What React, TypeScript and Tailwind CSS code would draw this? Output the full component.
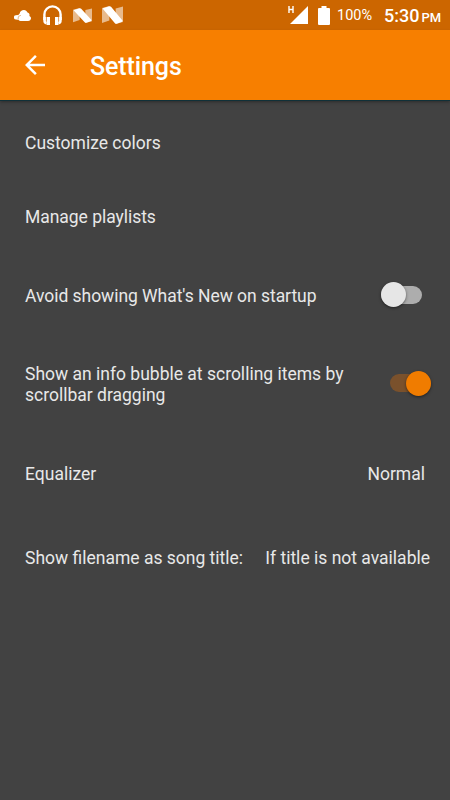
import type { ReactNode } from 'react'

function NougatIcon({ className }: { className: string }) {
  return (
    <svg className={className} viewBox="0 0 20 18" preserveAspectRatio="none" fill="#fff">
      <path d="M0 2 L7 0 V14.500 L0 17 Z" opacity="0.55" />
      <path d="M13 2.500 L20 0.500 V16 L13 18 Z" opacity="0.55" />
      <path d="M1 2.300 L7 0.200 Q8 0 8.600 .8 L19.500 14.500 Q19.500 15.500 18.500 16 L14 17.800 Q13 18 12.300 17.200 L1.300 3.500 Q.7 2.600 1 2.300 Z" />
    </svg>
  )
}

function StatusBar() {
  return (
    <div className="flex h-[30px] shrink-0 items-center bg-[#cc6600]">
      {/* Notifications */}
      <svg className="ml-3.5 h-[11px] w-[17px]" viewBox="0 0 17 11" fill="#fff">
        <path d="M2 5.300A2.100 2.100 0 0 0 2 9.500L5 10V5.600Q3.500 4.500 2 5.300z" />
        <path d="M6.500 11h7.500c1.700 0 3-1.200 3-2.700 0-1.100-.6-2-1.600-2.400.6-1.500-.3-3.200-1.900-3.500C12.800.9 11.600 0 10 0 7.700 0 6 1.400 5.700 3.500 4 4.500 3.800 6.500 4 8.500 4.200 10 5.200 11 6.500 11z" />
        <path d="M4.300 9.500C3.700 7.500 4.500 5.700 6.800 5.400" fill="none" stroke="#cc6600" strokeWidth="0.500" />
      </svg>
      <svg className="ml-3 h-5 w-[19px]" viewBox="0 0 19 20" fill="none" stroke="#fff">
        <path d="M1.400 15V9.500a8.100 8.100 0 0 1 16.200 0V15" strokeWidth="2.400" />
        <path d="M5.300 12v8M13.700 12v8" strokeWidth="3.400" />
        <path d="M1.600 12v4q0 1.800 2 2.200M17.400 12v4q0 1.800-2 2.200" strokeWidth="2.600" />
      </svg>
      <NougatIcon className="ml-[11px] h-[15px] w-[19px]" />
      <NougatIcon className="ml-2.5 h-[18px] w-[21px]" />

      {/* Signal, battery and clock */}
      <div className="ml-auto flex items-center text-white">
        <svg className="h-5 w-[21px]" viewBox="0 0 21 20" fill="#fff">
          <path d="M20 1v18H2z" />
          <path d="M1 1v7M5 1v7M1 4.500h4" stroke="#fff" strokeWidth="1.400" />
        </svg>
        <svg className="ml-[9px] h-[19px] w-3" viewBox="0 0 12 19" fill="#fff">
          <path d="M3.500 0h5v2H11q1 0 1 1v15q0 1-1 1H1q-1 0-1-1V3q0-1 1-1h2.500z" />
        </svg>
        <span className="ml-[7px] w-[47px] pt-[3px] text-[14.500px] leading-none">100%</span>
        <span className="flex w-[66px] items-baseline gap-[2px] pt-0.5 text-[18px] leading-none font-medium">
          5:30 <span className="text-[13px]">PM</span>
        </span>
      </div>
    </div>
  )
}

function Toggle({ on = false }: { on?: boolean }) {
  return on ? (
    <span className="-mr-px mb-1 flex h-[18px] w-[41px] items-center justify-end rounded-full bg-[#7a512c]">
      <span className="size-[25px] shrink-0 rounded-full bg-[#f07c00] shadow-[0_1px_3px_rgba(0,0,0,0.5)]" />
    </span>
  ) : (
    <span className="mr-2 mb-1 flex h-[18px] w-[41px] items-center rounded-full bg-[#adadad]">
      <span className="size-[25px] shrink-0 rounded-full bg-[#e6e6e6] shadow-[0_1px_3px_rgba(0,0,0,0.5)]" />
    </span>
  )
}

function Row({ label, className, children }: { label: ReactNode; className: string; children?: ReactNode }) {
  return (
    <li className={`flex items-center justify-between ${className}`}>
      <span>{label}</span>
      {children}
    </li>
  )
}

export default function App() {
  return (
    <main className="flex h-[800px] w-[450px] flex-col overflow-hidden bg-[#424242] font-['Roboto',sans-serif] text-[#e8e8e8]">
      <StatusBar />

      {/* Header */}
      <header className="flex h-[70px] shrink-0 items-center bg-[#f77f00] pl-5 text-white shadow-[0_1px_0_#103038,0_2px_3px_rgba(0,0,0,0.35)]">
        <svg className="size-[30px]" viewBox="0 0 24 24" fill="currentColor">
          <path d="M20 11H7.830l5.590-5.590L12 4l-8 8 8 8 1.410-1.410L7.830 13H20v-2z" />
        </svg>
        <h1 className="ml-10 pt-0.5 text-[25px] leading-none font-medium tracking-[-0.1px]">Settings</h1>
      </header>

      {/* Settings list */}
      <ul className="pt-1.5 pr-5 pl-[25px] text-[17.500px] leading-[21px]">
        <Row label="Customize colors" className="h-[74px]" />
        <Row label="Manage playlists" className="h-[74px] tracking-[-0.04px]" />
        <Row label="Avoid showing What's New on startup" className="h-[85px] tracking-[-0.04px]">
          <Toggle />
        </Row>
        <Row
          label={<>Show an info bubble at scrolling items by<br />scrollbar dragging</>}
          className="h-[92px]"
        >
          <Toggle on />
        </Row>
        <Row label="Equalizer" className="h-[87px]">
          <span className="pr-[5px]">Normal</span>
        </Row>
        <Row label="Show filename as song title:" className="h-[81px]">
          <span>If title is not available</span>
        </Row>
      </ul>
    </main>
  )
}
